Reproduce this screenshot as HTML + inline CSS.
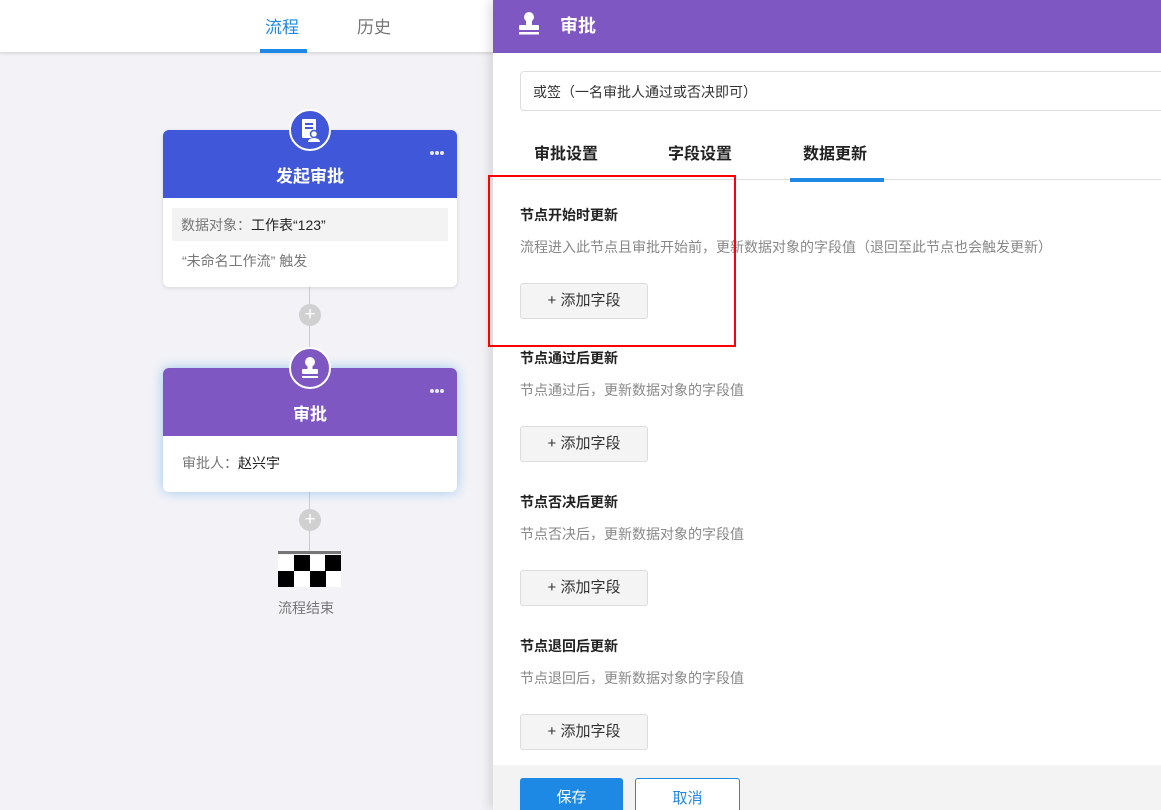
<!DOCTYPE html>
<html><head><meta charset="utf-8"><style>
*{box-sizing:border-box;margin:0;padding:0}
html,body{width:1161px;height:810px;overflow:hidden}
body{position:relative;background:#f3f3f7;font-family:"Liberation Sans","Noto Sans CJK SC",sans-serif;}
.top{position:absolute;left:0;top:0;width:493px;height:53px;background:#fff;border-bottom:1px solid #ddd;box-shadow:0 1px 3px rgba(0,0,0,.1)}
.tab{position:absolute;top:13px;font-size:17px}
.card{position:absolute;left:163px;width:294px;background:#fff;border-radius:6px;box-shadow:0 1px 4px rgba(0,0,0,.12)}
.hd{height:68px;border-radius:6px 6px 0 0;color:#fff;font-weight:bold;font-size:17px;text-align:center;padding-top:32px}
.circ{position:absolute;left:126px;top:-21px;width:42px;height:42px;border-radius:50%;border:2px solid #fff}
.dots{position:absolute;right:13px;top:12px;}
.dots i{display:inline-block;width:4px;height:4px;border-radius:50%;background:#e8e8f8;margin-left:1px}
.line{position:absolute;left:309px;width:1px;background:#ccc}
.plus{position:absolute;left:299px;width:22px;height:22px;border-radius:50%;background:#d0d0d0;color:#fff;text-align:center;line-height:21px;font-size:19px}
.panel{position:absolute;left:493px;top:0;width:668px;height:810px;background:#fff;box-shadow:-4px 0 10px rgba(0,0,0,.12);overflow:hidden}
.ph{height:53px;background:#7e57c2;color:#fff;font-weight:bold;font-size:18px;padding:12px 0 0 67px}
.sel{position:absolute;left:27px;top:71px;width:660px;height:40px;border:1px solid #ddd;border-radius:4px;font-size:14px;color:#333;padding:10px 12px}
.tabs span{position:absolute;top:140px;font-size:16px;font-weight:bold;color:#222}
.sec{position:absolute;left:27px}
.sec b{display:block;font-size:14px;color:#222}
.sec p{font-size:14px;color:#888;margin-top:12px}
.btn{margin-top:26px;width:128px;height:36px;border:1px solid #ddd;border-radius:3px;background:#f4f4f4;font-size:15px;color:#333;text-align:center;line-height:34px}
.foot{position:absolute;left:0;top:765px;width:668px;height:45px;background:#f3f3f3}
</style></head><body>
<div class="top">
<div class="tab" style="left:265px;color:#1e88e5">流程</div>
<div style="position:absolute;left:260px;top:49px;width:47px;height:4px;background:#1e88e5"></div>
<div class="tab" style="left:357px;color:#777">历史</div>
</div>
<div class="line" style="top:286px;height:82px"></div>
<div class="line" style="top:492px;height:60px"></div>
<div class="card" style="top:130px;height:157px">
<div class="hd" style="background:#3f57d8">发起审批</div>
<div class="circ" style="background:#3f57d8"><svg width="38" height="38" viewBox="0 0 38 38"><rect x="11" y="8" width="14" height="19" rx="1" fill="#fff"/><rect x="14" y="12" width="8" height="2" fill="#3f57d8"/><rect x="14" y="16" width="8" height="2" fill="#3f57d8"/><circle cx="23" cy="23" r="3.5" fill="#fff" stroke="#3f57d8" stroke-width="1.5"/><path d="M17 31a6 4 0 0 1 12 0z" fill="#fff"/></svg></div>
<div class="dots"><i></i><i></i><i></i></div>
<div style="margin:10px 9px 0;height:33px;background:#f3f3f3;font-size:14px;padding:7px 9px;color:#777">数据对象：<span style="color:#222">工作表“123”</span></div>
<div style="font-size:14px;color:#777;padding:10px 19px">“未命名工作流” 触发</div>
</div>
<div class="plus" style="top:304px">+</div>
<div class="card" style="top:368px;height:124px;box-shadow:0 0 12px rgba(30,136,229,.4)">
<div class="hd" style="background:#7e57c2">审批</div>
<div class="circ" style="background:#7e57c2"><svg width="38" height="38" viewBox="0 0 38 38"><circle cx="19" cy="13" r="5" fill="#fff"/><rect x="16.5" y="15" width="5" height="6" fill="#fff"/><rect x="11" y="20" width="16" height="5" rx="1" fill="#fff"/><rect x="11" y="27" width="16" height="2" fill="#fff"/></svg></div>
<div class="dots"><i></i><i></i><i></i></div>
<div style="font-size:14px;color:#777;padding:17px 19px">审批人：<span style="color:#222">赵兴宇</span></div>
</div>
<div class="plus" style="top:509px">+</div>
<div style="position:absolute;left:278px;top:551px;width:63px;height:3px;background:#777"></div>
<svg style="position:absolute;left:278px;top:555px" width="63" height="32"><rect width="63" height="32" fill="#fff"/><rect x="16" y="0" width="16" height="16"/><rect x="47" y="0" width="16" height="16"/><rect x="0" y="16" width="16" height="16"/><rect x="32" y="16" width="16" height="16"/></svg>
<div style="position:absolute;left:278px;top:598px;font-size:14px;color:#777">流程结束</div>
<div class="panel">
<div class="ph">审批</div>
<svg style="position:absolute;left:25px;top:12px" width="22" height="24" viewBox="0 0 22 24"><circle cx="11" cy="5" r="5" fill="#fff"/><rect x="8" y="8" width="6" height="6" fill="#fff"/><rect x="1" y="13" width="20" height="5" rx="1" fill="#fff"/><rect x="1" y="20" width="20" height="2.5" fill="#fff"/></svg>
<div class="sel">或签（一名审批人通过或否决即可）</div>
<div class="tabs"><span style="left:41px">审批设置</span><span style="left:175px">字段设置</span><span style="left:310px">数据更新</span></div>
<div style="position:absolute;left:27px;top:179px;width:641px;height:1px;background:#ddd"></div>
<div style="position:absolute;left:297px;top:178px;width:94px;height:4px;background:#1e88e5"></div>
<div class="sec" style="top:205px"><b>节点开始时更新</b><p>流程进入此节点且审批开始前，更新数据对象的字段值（退回至此节点也会触发更新）</p><div class="btn">+ 添加字段</div></div>
<div class="sec" style="top:348px"><b>节点通过后更新</b><p>节点通过后，更新数据对象的字段值</p><div class="btn">+ 添加字段</div></div>
<div class="sec" style="top:492px"><b>节点否决后更新</b><p>节点否决后，更新数据对象的字段值</p><div class="btn">+ 添加字段</div></div>
<div class="sec" style="top:636px"><b>节点退回后更新</b><p>节点退回后，更新数据对象的字段值</p><div class="btn">+ 添加字段</div></div>
<div class="foot">
<div style="position:absolute;left:27px;top:13px;width:103px;height:40px;background:#1e88e5;border-radius:3px;color:#fff;font-size:15px;text-align:center;line-height:40px">保存</div>
<div style="position:absolute;left:142px;top:13px;width:105px;height:40px;border:1px solid #1e88e5;border-radius:3px;background:#fff;color:#1e88e5;font-size:15px;text-align:center;line-height:40px">取消</div>
</div>
</div>
<div style="position:absolute;left:488px;top:175px;width:248px;height:172px;border:2px solid #f00"></div>
</body></html>
